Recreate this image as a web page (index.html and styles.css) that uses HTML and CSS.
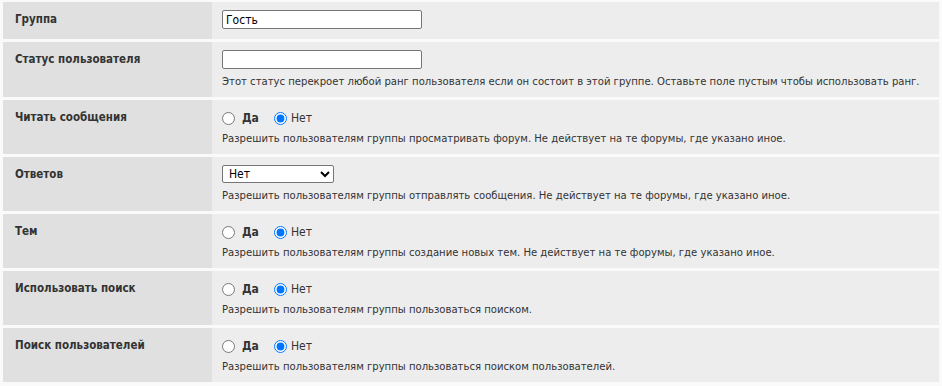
FILE: index.html
```html
<!DOCTYPE html>
<html lang="ru">
<head>
  <meta charset="UTF-8" />
  <title>Права группы</title>
  <link rel="stylesheet" href="styles.css">
</head>
<body>
  <div class="form-table">
    <div class="row row-first">
      <div class="label-cell">Группа</div>
      <div class="field-cell">
        <input type="text" class="text-input" value="Гость" />
      </div>
    </div>

    <div class="row">
      <div class="label-cell">Статус пользователя</div>
      <div class="field-cell">
        <input type="text" class="text-input" value="" />
        <div class="hint">Этот статус перекроет любой ранг пользователя если он состоит в этой группе. Оставьте поле пустым чтобы использовать ранг.</div>
      </div>
    </div>

    <div class="row">
      <div class="label-cell">Читать сообщения</div>
      <div class="field-cell">
        <div class="radios">
          <input type="radio" name="read" /><b class="yes">Да</b>
          <input type="radio" name="read" class="no-radio" checked /><span class="no">Нет</span>
        </div>
        <div class="hint hint-radio">Разрешить пользователям группы просматривать форум. Не действует на те форумы, где указано иное.</div>
      </div>
    </div>

    <div class="row">
      <div class="label-cell">Ответов</div>
      <div class="field-cell">
        <select class="select">
          <option>Нет</option>
          <option>Да</option>
        </select>
        <div class="hint">Разрешить пользователям группы отправлять сообщения. Не действует на те форумы, где указано иное.</div>
      </div>
    </div>

    <div class="row">
      <div class="label-cell">Тем</div>
      <div class="field-cell">
        <div class="radios">
          <input type="radio" name="topics" /><b class="yes">Да</b>
          <input type="radio" name="topics" class="no-radio" checked /><span class="no">Нет</span>
        </div>
        <div class="hint hint-radio">Разрешить пользователям группы создание новых тем. Не действует на те форумы, где указано иное.</div>
      </div>
    </div>

    <div class="row">
      <div class="label-cell">Использовать поиск</div>
      <div class="field-cell">
        <div class="radios">
          <input type="radio" name="search" /><b class="yes">Да</b>
          <input type="radio" name="search" class="no-radio" checked /><span class="no">Нет</span>
        </div>
        <div class="hint hint-radio">Разрешить пользователям группы пользоваться поиском.</div>
      </div>
    </div>

    <div class="row">
      <div class="label-cell">Поиск пользователей</div>
      <div class="field-cell">
        <div class="radios">
          <input type="radio" name="users" /><b class="yes">Да</b>
          <input type="radio" name="users" class="no-radio" checked /><span class="no">Нет</span>
        </div>
        <div class="hint hint-radio">Разрешить пользователям группы пользоваться поиском пользователей.</div>
      </div>
    </div>
  </div>
</body>
</html>
```

FILE: styles.css
```css
* {
  margin: 0;
  padding: 0;
  box-sizing: border-box;
}

body {
  background: #fafafa;
  font-family: "DejaVu Sans Condensed", "DejaVu Sans", sans-serif;
  font-size: 11.2px;
  color: #333;
}

.form-table {
  display: flex;
  flex-direction: column;
  gap: 3px;
  padding: 2px 3px;
}

.row {
  display: grid;
  grid-template-columns: 209px 1fr;
}

.label-cell {
  background: #dfe0df;
  padding: 9px 12px 8px;
  font-weight: bold;
  font-size: 11.5px;
  line-height: 16px;
}

.field-cell {
  background: #ededed;
  padding: 8px 10px 7px;
}

.row-first .field-cell {
  padding-bottom: 10px;
}

.text-input {
  display: block;
  width: 200px;
  height: 19px;
  border: 1px solid #767676;
  border-radius: 2px;
  padding: 0 3px;
  font-family: inherit;
  font-size: 12px;
  color: #000;
  background: #fff;
}

.select {
  display: block;
  width: 112px;
  height: 18px;
  border: 1px solid #767676;
  border-radius: 2px;
  font-family: inherit;
  font-size: 12px;
  color: #000;
  background: #fff;
  padding: 0 2px;
}

.hint {
  margin-top: 5px;
  line-height: 16px;
}

.hint-radio {
  margin-top: 3px;
}

.radios {
  display: flex;
  align-items: center;
  height: 20px;
}

.radios input {
  margin: 0;
  width: 13px;
  height: 13px;
}

.yes {
  margin-left: 7px;
  font-size: 12px;
}

.no-radio {
  margin-left: 15px !important;
}

.no {
  margin-left: 4px;
  font-size: 12px;
}
```
